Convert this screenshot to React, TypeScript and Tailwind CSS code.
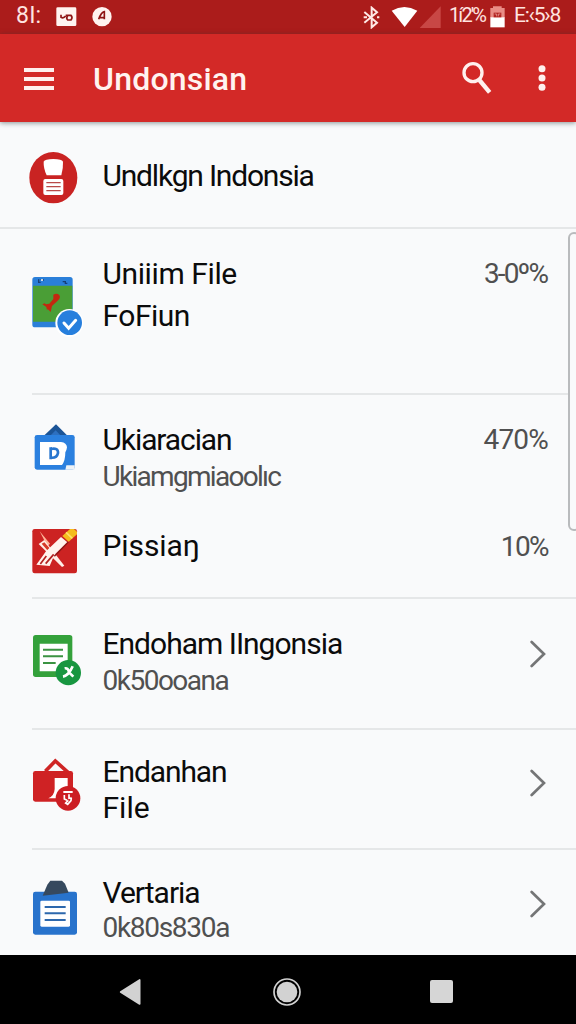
import type { ReactNode } from 'react'

function StatusBar() {
  return (
    <div className="flex h-[34px] items-center bg-[#ab1c1b] text-[#ffe4e0]">
      <span className="ml-4 w-10 pb-1 text-[23px] leading-none tracking-[0.2px]">8I:</span>
      <svg className="h-5 w-[21px]" viewBox="0 0 63 60">
        <rect x="1" y="1" width="60" height="56" rx="4" fill="#fff3f0" />
        <path d="M15 23v8q8 4 14-4" fill="none" stroke="#8f1515" strokeWidth="5" />
        <path d="M29 25h16q6 6 0 14h-10q-6-6 0-12" fill="none" stroke="#8f1515" strokeWidth="5" />
      </svg>
      <svg className="ml-[15px] h-5 w-5" viewBox="0 0 60 60">
        <circle cx="30" cy="29" r="29" fill="#fff3f0" />
        <path d="M20 37q8-22 17-23v23M20 32h17" fill="none" stroke="#8f1515" strokeWidth="5" />
      </svg>
      <svg className="ml-[251px] h-[23px] w-[17px]" viewBox="0 0 51 69" fill="none" stroke="#ffe9e6" strokeWidth="6">
        <path d="M4 18l38 32L26 64V5l16 14L4 50M2 34h10M42 34h7" />
      </svg>
      <svg className="ml-[11px] h-[22px] w-[27px]" viewBox="0 0 81 66">
        <path d="M2 14Q40-8 79 14L41 63z" fill="#fff" />
      </svg>
      <svg className="ml-px h-[22px] w-[22px]" viewBox="0 0 66 66">
        <path d="M65 1v65H2z" fill="#c84745" />
      </svg>
      <span className="ml-2 w-[41px] whitespace-nowrap pb-1 text-[20px] leading-none tracking-[-1.9px]">1í2'%</span>
      <svg className="h-[22px] w-[15px]" viewBox="0 0 45 66">
        <path d="M1 6h8V1h26v5h9v30H1z" fill="#e98c86" />
        <path d="M1 34h43v30H1z" fill="#fff" />
        <path d="M11 20h23v14H11z" fill="#b32321" />
        <path d="M14 24h6v7M25 31v-7h6" fill="none" stroke="#f3b5b0" strokeWidth="2" />
      </svg>
      <span className="ml-[9px] whitespace-nowrap pb-1 text-[21px] leading-none tracking-[-1.2px]">E:‹5›8</span>
    </div>
  )
}

function AppBar() {
  return (
    <header className="relative flex h-[88px] items-center bg-[#d32927] pb-px shadow-[0_1px_5px_rgba(40,60,60,0.55)]">
      <div className="ml-6 flex w-[30px] flex-col gap-[5px] pt-[3px]">
        <span className="h-1 bg-[#fff0ee]" />
        <span className="h-1 bg-[#fff0ee]" />
        <span className="h-1 bg-[#fff0ee]" />
      </div>
      <h1 className="ml-[39px] pt-[3px] text-[32px] font-medium leading-10 tracking-[0.2px] text-[#fff3f0]">Undonsian</h1>
      <svg className="ml-auto h-8 w-[30px]" viewBox="0 0 90 96" fill="none" stroke="#fff0ee">
        <circle cx="33" cy="32" r="27" strokeWidth="10" />
        <path d="M52 54l31 37" strokeWidth="13" />
      </svg>
      <svg className="mr-[30px] ml-[46px] h-[26px] w-2" viewBox="0 0 24 78" fill="#fff0ee">
        <circle cx="12" cy="11" r="10.5" />
        <circle cx="12" cy="39" r="10.5" />
        <circle cx="12" cy="67" r="10.5" />
      </svg>
    </header>
  )
}

function ChefIcon() {
  return (
    <svg className="mt-7 h-14 w-14" viewBox="84 60 168 168">
      <ellipse cx="160" cy="143" rx="72" ry="77" fill="#c92322" />
      <path d="M131 95Q134 87 160 87t29 8q1 18-5 41h-44q-10-22-9-41z" fill="#fff" />
      <rect x="130" y="147" width="60" height="48" rx="6" fill="#fff" />
      <path d="M139 158h43M139 170h43M139 182h43" stroke="#b94a48" strokeWidth="3.5" />
    </svg>
  )
}

function FileCheckIcon() {
  return (
    <svg className="mt-[46px] h-16 w-14" viewBox="84 75 168 192">
      <rect x="97" y="81" width="121" height="151" rx="8" fill="#2a7fd9" />
      <path d="M99 107h118v108H99z" fill="#4a9e36" />
      <path d="M116 88v9h6M122 89h7v4M188 95h8v5h6" fill="none" stroke="#173f75" strokeWidth="4" />
      <path d="M123 90h6" stroke="#fff" strokeWidth="4" />
      <path d="M160 134q10-6 18 1q5 9-5 17l-17 16l-4 18l-9-9l-2 4l-2-10l-12-8l7-3l4 3l10-2l12-14z" fill="#c3280f" />
      <circle cx="208" cy="219" r="42" fill="#fff" />
      <circle cx="209" cy="218" r="37" fill="#277fdd" />
      <path d="M192 219l14 16l21-24" fill="none" stroke="#fff" strokeWidth="9" strokeLinecap="round" />
    </svg>
  )
}

function BlueBagIcon() {
  return (
    <svg className="mt-7 h-12 w-14" viewBox="84 36 168 144">
      <path d="M130 76l38-36l36 36z" fill="#1b5497" />
      <path d="M149 76l18-18l17 18z" fill="#2d70c0" />
      <rect x="104" y="72" width="120" height="104" rx="7" fill="#2b80df" />
      <path d="M199 163h25v13h-28z" fill="#eef2f6" />
      <path d="M120 93h63q17 2 18 16q-1 9-5 15q0 25-10 38h-66z" fill="#fff" />
      <path d="M152 109v36M152 114q23-5 22 12q-3 16-22 14" fill="none" stroke="#2876cf" strokeWidth="8" />
    </svg>
  )
}

function BrushIcon() {
  return (
    <svg className="mt-[19px] h-12 w-14" viewBox="84 351 168 144">
      <rect x="97" y="357" width="134" height="133" rx="7" fill="#cc2322" />
      <path d="M119 364l31 37l-8 8z" fill="#ffb699" />
      <path d="M116 402l17-12l60 77l-7 4z" fill="#fff0e8" />
      <path d="M125 401l8-4l18 20l-7 6z" fill="#d63a28" />
      <path d="M109 464l29-40l45-43l19 16l-39 38l-14 33z" fill="#fff4ee" />
      <path d="M121 462l18-24M137 461l24-28" stroke="#b3211f" strokeWidth="5" />
      <path d="M187 378l23-21h12l9 8v8l-25 22z" fill="#f5bd1c" />
      <path d="M198 367l19 18" stroke="#ffe06a" strokeWidth="5" />
      <path d="M205 396l-42 43" stroke="#8f1717" strokeWidth="4" />
    </svg>
  )
}

function GreenDocIcon() {
  return (
    <svg className="mt-[34px] h-[55px] w-14" viewBox="84 66 168 165">
      <rect x="99" y="72" width="118" height="126" rx="8" fill="#34a13b" />
      <path d="M119 98h84v48l-26 35h-58z" fill="#fff" />
      <path d="M129 116h60M129 136h60M129 156h38" stroke="#3b9342" strokeWidth="6" />
      <circle cx="205" cy="185" r="38" fill="#189640" />
      <path d="M189 197q17-3 29-31M194 172q11-2 13 12l13 13" fill="none" stroke="#fff" strokeWidth="8" />
    </svg>
  )
}

function RedBagIcon() {
  return (
    <svg className="mt-[27px] h-14 w-14" viewBox="84 48 168 168">
      <path d="M136 91l30-31l38 34" fill="none" stroke="#cf2525" strokeWidth="11" />
      <rect x="99" y="90" width="120" height="92" rx="7" fill="#cf2224" />
      <path d="M164 111h39v30q-34 0-34 31h-24q18-8 19-28z" fill="#fff" />
      <circle cx="204" cy="172" r="37" fill="#cc1d23" />
      <path d="M190 153h28" stroke="#fff" strokeWidth="6" />
      <path d="M193 162v12l8 4M207 160v12l8-1M214 170l-1 9l-10 11l-6-4l8-8" fill="none" stroke="#fff" strokeWidth="5" />
    </svg>
  )
}

function BlueDocIcon() {
  return (
    <svg className="mt-7 h-[58px] w-14" viewBox="84 54 168 174">
      <rect x="99" y="95" width="132" height="129" rx="7" fill="#2873cc" />
      <path d="M151 62h35l9 9l11 27l-78 9l14-33z" fill="#36495e" />
      <rect x="121" y="122" width="89" height="78" rx="4" fill="#fff" />
      <path d="M134 141h63M134 160h63M134 180h63" stroke="#2d68ad" strokeWidth="6" />
    </svg>
  )
}

function Chevron() {
  return (
    <svg className="mr-7 h-7 w-[18px]" viewBox="0 0 54 84" fill="none" stroke="#747576" strokeWidth="8" strokeLinecap="round">
      <path d="M5 6l37 36L5 78" />
    </svg>
  )
}

type RowProps = {
  icon: ReactNode
  className: string
  children: ReactNode
  end?: ReactNode
  endClass?: string
}

function Row({ icon, className, children, end, endClass }: RowProps) {
  return (
    <div className={`flex items-start pl-7 ${className}`}>
      {icon}
      <div className="flex flex-1 flex-col whitespace-nowrap pl-[18.5px] text-[30px] leading-9 text-[#0b0b0b]">{children}</div>
      <div className={endClass}>{end}</div>
    </div>
  )
}

const percent = 'text-[28px] leading-9 text-[#505050]'

export default function App() {
  return (
    <div className="flex h-[1024px] w-[576px] flex-col overflow-hidden bg-[#f9fafb] font-['Roboto',sans-serif]">
      <StatusBar />
      <AppBar />
      <main className="relative h-[833px] overflow-hidden">
        <Row icon={<ChefIcon />} className="h-[107px] border-b-2 border-[#e5e7e8]">
          <span className="mt-9 tracking-[-1.2px]">Undlkgn Indonsia</span>
        </Row>
        <Row icon={<FileCheckIcon />} className="h-[164px]" end="3-0º%" endClass={`${percent} mt-[27px] pr-[29px] tracking-[-1.9px]`}>
          <span className="mt-[27px] tracking-[-0.4px]">Uniiim File</span>
          <span className="mt-1.5 tracking-[-0.5px]">FoFiun</span>
        </Row>
        <hr className="ml-8 border-t-2 border-[#e5e7e8]" />
        <Row icon={<BlueBagIcon />} className="h-[113px]" end="470%" endClass={`${percent} mt-[27px] pr-7 tracking-[-0.8px]`}>
          <span className="mt-[27px] tracking-[-1.1px]">Ukiaracian</span>
          <span className="mt-px text-[28px] tracking-[-1.7px] text-[#505050]">Ukiamgmiaoolıc</span>
        </Row>
        <Row icon={<BrushIcon />} className="h-[89px]" end="10%" endClass={`${percent} mt-[21px] pr-7 tracking-[-1.6px]`}>
          <span className="mt-5 tracking-[-0.1px]">Pissiaŋ</span>
        </Row>
        <hr className="ml-8 border-t-2 border-[#e5e7e8]" />
        <Row icon={<GreenDocIcon />} className="h-[129px]" end={<Chevron />} endClass="mt-[41px]">
          <span className="mt-[27px] tracking-[-1px]">Endoham IIngonsia</span>
          <span className="mt-px text-[28px] tracking-[-1.5px] text-[#505050]">0k50ooana</span>
        </Row>
        <hr className="ml-8 border-t-2 border-[#e5e7e8]" />
        <Row icon={<RedBagIcon />} className="h-[118px]" end={<Chevron />} endClass="mt-[39px]">
          <span className="mt-6 tracking-[-1.1px]">Endanhan</span>
          <span className="leading-[35px]">File</span>
        </Row>
        <hr className="ml-8 border-t-2 border-[#e5e7e8]" />
        <Row icon={<BlueDocIcon />} className="h-[106px]" end={<Chevron />} endClass="mt-10">
          <span className="mt-[25px] tracking-[-1px]">Vertaria</span>
          <span className="-mt-px text-[28px] tracking-[-1.3px] text-[#505050]">0k80s830a</span>
        </Row>
        {/* scroll thumb over the right edge */}
        <div className="absolute top-[110px] right-[-4px] h-[299px] w-3 rounded-md border-2 border-[#b9bbbd] bg-[#f9fafb]" />
      </main>
      <nav className="flex h-[69px] items-center bg-black pt-1">
        <svg className="ml-[118px] h-7 w-6" viewBox="0 0 72 84">
          <path d="M8 42L65 6v72z" fill="#d2d2d2" stroke="#d2d2d2" strokeWidth="5" strokeLinejoin="round" />
        </svg>
        <svg className="ml-[130px] h-[30px] w-[30px]" viewBox="0 0 90 90">
          <circle cx="45" cy="45" r="39" fill="none" stroke="#d2d2d2" strokeWidth="5" />
          <circle cx="45" cy="45" r="31" fill="#d2d2d2" />
        </svg>
        <span className="ml-32 h-[23px] w-[23px] rounded-[2px] bg-[#d6d6d6]" />
      </nav>
    </div>
  )
}
